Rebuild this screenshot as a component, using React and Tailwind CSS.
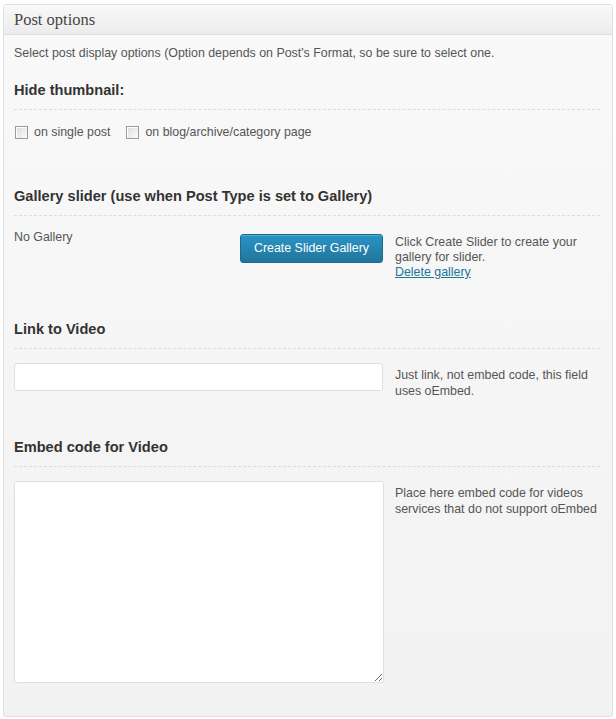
import React from "react";

function Checkbox() {
  return (
    <span className="inline-block w-[13px] h-[13px] border border-[#9a9a9a] bg-gradient-to-br from-[#dcdcdc] to-[#fbfbfb] shadow-[inset_1px_1px_0_#fff]"></span>
  );
}

function Heading({ children, className = "" }) {
  return (
    <div className={"border-b border-dashed border-[#dcdcdc] pb-[9px] " + className}>
      <h3 className="text-[14.6px] leading-[20px] font-bold text-[#333]">{children}</h3>
    </div>
  );
}

export default function App() {
  return (
    <div className="w-[616px] h-[719px] bg-white pt-[4px] pl-[3px] font-['Liberation_Sans',Arial,sans-serif]">
      <div className="w-[610px] h-[713px] border border-[#dfdfdf] rounded-[3px] bg-gradient-to-b from-[#f9f9f9] to-[#f2f2f2] shadow-[0_1px_0_#fff_inset]">
        <div className="h-[30px] border-b border-[#dfdfdf] bg-gradient-to-b from-[#f9f9f9] to-[#ececec] pl-[10px] flex items-center">
          <span className="font-['Liberation_Serif',Georgia,serif] text-[16.5px] text-[#464646] leading-none pt-[1px]">Post options</span>
        </div>
        <div className="pl-[10px] pr-[12px]">
          <p className="mt-[9px] text-[12.4px] leading-[18px] text-[#555]">
            Select post display options (Option depends on Post's Format, so be sure to select one.
          </p>

          <Heading className="mt-[18px]">Hide thumbnail:</Heading>
          <div className="mt-[13px] flex items-center h-[18px] text-[12.4px] text-[#555]">
            <label className="flex items-center">
              <span className="ml-[1px] flex"><Checkbox /></span>
              <span className="ml-[6px]">on single post</span>
            </label>
            <label className="flex items-center ml-[16px]">
              <Checkbox />
              <span className="ml-[6px]">on blog/archive/category page</span>
            </label>
          </div>

          <Heading className="mt-[45px]">Gallery slider (use when Post Type is set to Gallery)</Heading>
          <div className="mt-[12px] flex">
            <div className="w-[369px] shrink-0 flex justify-between">
              <span className="text-[12.4px] leading-[18px] text-[#555]">No Gallery</span>
              <button className="mt-[6px] w-[143px] h-[29px] rounded-[3px] border border-[#1e6a8d] bg-gradient-to-b from-[#2a95c5] to-[#21759b] text-white text-[12.4px] shadow-[inset_0_1px_0_rgba(120,200,230,0.5)]">
                Create Slider Gallery
              </button>
            </div>
            <div className="ml-[12px] mt-[7px] text-[12.4px] leading-[15px] text-[#555] w-[200px]">
              Click Create Slider to create your gallery for slider.
              <br />
              <a href="#" className="text-[#21759b] underline">Delete gallery</a>
            </div>
          </div>

          <Heading className="mt-[39px]">Link to Video</Heading>
          <div className="mt-[14px] flex">
            <input className="w-[369px] shrink-0 h-[28px] bg-white border border-[#dfdfdf] rounded-[3px] outline-none" />
            <div className="ml-[12px] mt-[4px] text-[12.4px] leading-[16px] text-[#555] w-[205px]">
              Just link, not embed code, this field uses oEmbed.
            </div>
          </div>

          <Heading className="mt-[38px]">Embed code for Video</Heading>
          <div className="mt-[14px] flex">
            <textarea className="block w-[370px] shrink-0 h-[202px] bg-white border border-[#dfdfdf] rounded-[3px] outline-none"></textarea>
            <div className="ml-[11px] mt-[4px] text-[12.4px] leading-[16px] text-[#555] w-[205px]">
              Place here embed code for videos services that do not support oEmbed
            </div>
          </div>
        </div>
      </div>
    </div>
  );
}
